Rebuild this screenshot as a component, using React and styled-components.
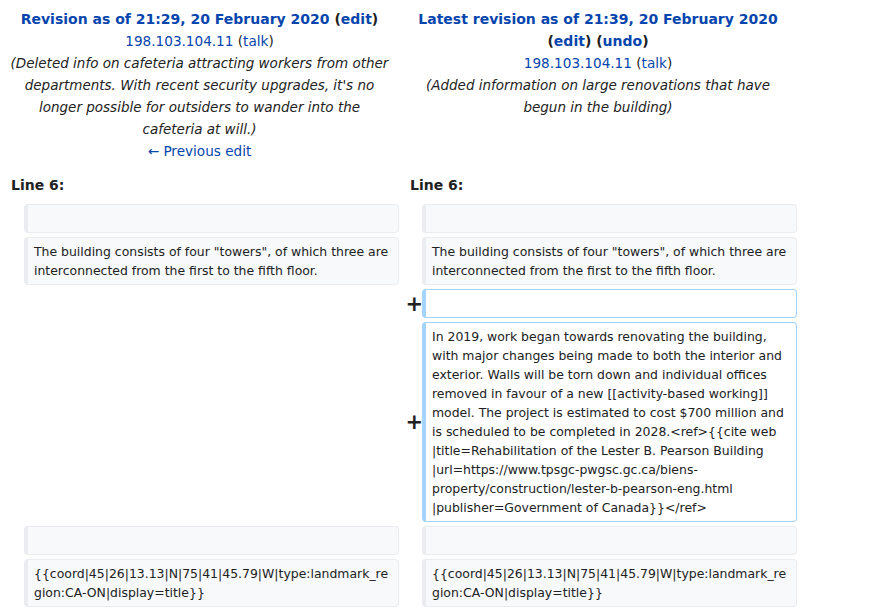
import React from "react";
import styled, { createGlobalStyle } from "styled-components";

const GlobalStyle = createGlobalStyle`
  body {
    margin: 0;
    padding: 0;
    background: #fff;
    font-family: "DejaVu Sans", sans-serif;
    color: #202122;
  }
`;

const DiffTable = styled.div`
  display: grid;
  grid-template-columns: 24px 375px 23px 375px;
  row-gap: 4px;
  padding-top: 8px;
  width: 797px;
`;

const TitleCell = styled.div`
  grid-column: span 2;
  text-align: center;
  font-size: 13.6px;
  line-height: 22px;
  padding: 0 10px;
`;

const Title = styled.div`
  font-weight: bold;
  font-size: 14px;
  margin: 0 -6px;
`;

const Link = styled.a`
  color: #0645ad;
  text-decoration: none;
  font-weight: ${(p) => (p.$bold ? "bold" : "normal")};
`;

const Comment = styled.div`
  font-style: italic;
  font-size: 13.5px;
  color: #222;
`;

const LineNo = styled.div`
  grid-column: span 2;
  font-size: 14px;
  font-weight: bold;
  line-height: 22px;
  padding: 8px 0 4px 11px;
`;

const Marker = styled.div`
  display: flex;
  align-items: center;
  justify-content: flex-end;
  margin-right: -1px;
  font-size: 21px;
  font-weight: bold;
  color: #202122;
`;

const Empty = styled.div`
  grid-column: span ${(p) => p.$span || 1};
`;

const Cell = styled.div`
  box-sizing: border-box;
  min-height: 29px;
  font-size: 12.45px;
  line-height: 19px;
  padding: 4px 6px;
  border-style: solid;
  border-width: 1px 1px 1px 4px;
  border-radius: 4px;
  white-space: pre-wrap;
  overflow-wrap: break-word;
  color: #202122;
  background: ${(p) => (p.$added ? "#fff" : "#f8f9fa")};
  border-color: ${(p) => (p.$added ? "#a3d3ff" : "#eaecf0")};
`;

const Paren = ({ children, bold }) => (
  <span style={bold ? { fontWeight: "bold" } : undefined}>
    (<Link $bold={bold}>{children}</Link>)
  </span>
);

const para1 =
  'The building consists of four "towers", of which three are interconnected from the first to the fifth floor.';
const coord =
  "{{coord|45|26|13.13|N|75|41|45.79|W|type:landmark_region:CA-ON|display=title}}";
const added =
  "In 2019, work began towards renovating the building, with major changes being made to both the interior and exterior. Walls will be torn down and individual offices removed in favour of a new [[activity-based working]] model. The project is estimated to cost $700 million and is scheduled to be completed in 2028.<ref>{{cite web |title=Rehabilitation of the Lester B. Pearson Building |url=https://www.tpsgc-pwgsc.gc.ca/biens-property/construction/lester-b-pearson-eng.html |publisher=Government of Canada}}</ref>";

export default function App() {
  return (
    <>
      <GlobalStyle />
      <DiffTable>
        <TitleCell>
          <Title>
            <Link $bold>Revision as of 21:29, 20 February 2020</Link>{" "}
            <Paren bold>edit</Paren>
          </Title>
          <div>
            <Link>198.103.104.11</Link> <Paren>talk</Paren>
          </div>
          <Comment>
            (Deleted info on cafeteria attracting workers from other
            departments. With recent security upgrades, it's no longer
            possible for outsiders to wander into the cafeteria at will.)
          </Comment>
          <div>
            <Link>← Previous edit</Link>
          </div>
        </TitleCell>
        <TitleCell>
          <Title>
            <Link $bold>Latest revision as of 21:39, 20 February 2020</Link>{" "}
            <Paren bold>edit</Paren> <Paren bold>undo</Paren>
          </Title>
          <div>
            <Link>198.103.104.11</Link> <Paren>talk</Paren>
          </div>
          <Comment>
            (Added information on large renovations that have begun in the
            building)
          </Comment>
        </TitleCell>

        <LineNo>Line 6:</LineNo>
        <LineNo>Line 6:</LineNo>

        <Marker />
        <Cell />
        <Marker />
        <Cell />

        <Marker />
        <Cell>{para1}</Cell>
        <Marker />
        <Cell>{para1}</Cell>

        <Empty $span={2} />
        <Marker>+</Marker>
        <Cell $added />

        <Empty $span={2} />
        <Marker>+</Marker>
        <Cell $added>{added}</Cell>

        <Marker />
        <Cell />
        <Marker />
        <Cell />

        <Marker />
        <Cell>{coord}</Cell>
        <Marker />
        <Cell>{coord}</Cell>
      </DiffTable>
    </>
  );
}
